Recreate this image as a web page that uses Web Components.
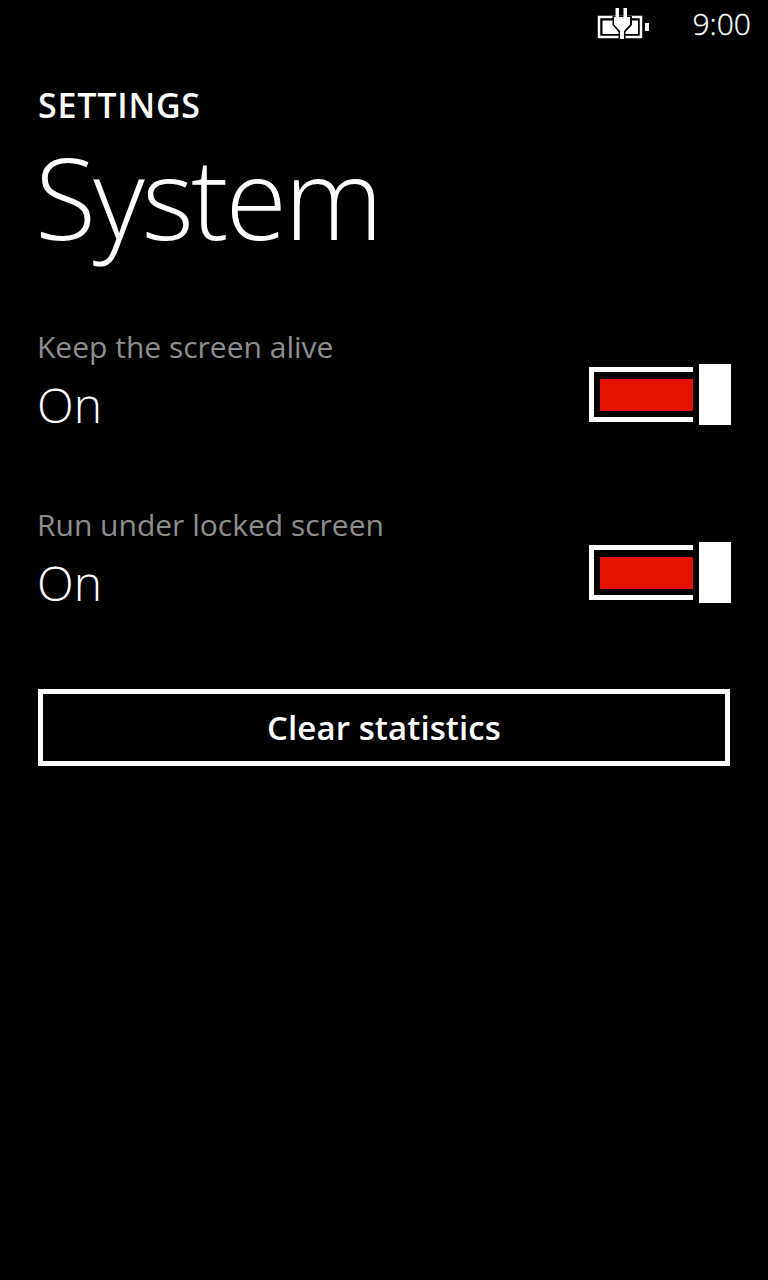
<!DOCTYPE html>
<html><head><meta charset="utf-8"><style>
html,body{margin:0;padding:0;background:#000;color:#fff;font-family:"Open Sans","Noto Sans",sans-serif}
body{width:768px;height:1280px;overflow:hidden}
</style></head><body>
<app-status time="9:00"></app-status>
<page-title app="SETTINGS" page="System"></page-title>
<setting-row label="Keep the screen alive" value="On"></setting-row>
<setting-row label="Run under locked screen" value="On"></setting-row>
<wp-button>Clear statistics</wp-button>
<script>
function def(name,html){customElements.define(name,class extends HTMLElement{connectedCallback(){if(this.shadowRoot)return;const s=this.attachShadow({mode:'open'});s.innerHTML=html(this)}})}
def('app-status',e=>`<style>:host{display:flex;height:50px;justify-content:flex-end;align-items:center;padding-right:17px;box-sizing:border-box}
svg{display:block;margin-right:43px}
span{font-size:30px;line-height:48px;height:50px;font-weight:300;-webkit-text-stroke:.3px #fff}</style>
<svg width="52" height="40" viewBox="0 0 52 40" fill="none"><rect x="2" y="12" width="42" height="20" stroke="#fff" stroke-width="2.500"/><path d="M5.500 15.500H41V29H5.500z" fill="#fff"/><path d="M15.500 11h19.500v9l-6.500 7v7h-7v-7l-6-7z" fill="#000"/><path d="M17 12h16v7.500l-6 6.500v8h-4v-8l-6-6.500z" fill="#fff"/><path d="M18.500 3H22v10h-3.500zM26.500 3H30v10h-3.500z" fill="#fff"/><rect x="48" y="18" width="4" height="8" fill="#fff"/></svg><span>${e.getAttribute('time')}</span>`);
def('page-title',e=>`<style>:host{display:block;padding:33px 0 66px 38px}
.a{font-size:34px;font-weight:600;line-height:44px;letter-spacing:.8px}
.p{font-size:112px;font-weight:300;line-height:130px;margin:5px 0 0 -3px;letter-spacing:-2.9px}</style>
<div class="a">${e.getAttribute('app')}</div><div class="p">${e.getAttribute('page')}</div>`);
def('setting-row',e=>`<style>:host{display:flex;justify-content:space-between;align-items:flex-start;height:100px;margin:0 37px 78px 37px}
.l{font-size:30px;color:#8e8e8e;line-height:38px}
.v{font-size:48px;font-weight:300;line-height:60px;margin-top:9px}
.sw{display:flex;align-items:center;gap:6px;margin-top:36px}
.track{height:45px;width:99px;border:5px solid #fff;border-right:0;display:flex}
.fill{flex:1;background:#e51400;margin:7px 0 6px 6px}
.thumb{width:32px;height:61px;background:#fff}</style>
<div><div class="l">${e.getAttribute('label')}</div><div class="v">${e.getAttribute('value')}</div></div>
<div class="sw"><div class="track"><div class="fill"></div></div><div class="thumb"></div></div>`);
def('wp-button',e=>`<style>:host{display:flex;align-items:center;justify-content:center;box-sizing:border-box;margin:83px 38px 0;height:77px;border:5px solid #fff;font-size:33px;font-weight:600;letter-spacing:.1px}</style><slot></slot>`);
</script>
</body></html>
